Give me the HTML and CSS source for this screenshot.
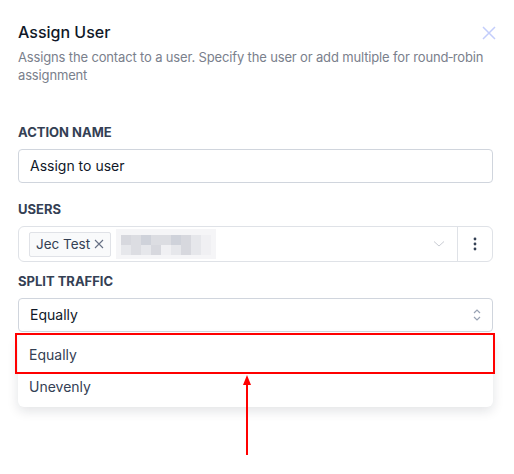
FILE: index.html
```html
<!DOCTYPE html>
<html lang="en">
<head>
    <meta charset="UTF-8">
    <meta name="viewport" content="width=device-width, initial-scale=1.0">
    <title>Assign User</title>
    <link rel="stylesheet" href="styles.css">
</head>
<body>
<div class="panel">
    <div class="header">
        <h1 class="title">Assign User</h1>
        <svg class="close" width="14" height="14" viewBox="0 0 14 14"><path d="M1 1L13 13M13 1L1 13" stroke="currentColor" stroke-width="1.5" fill="none"/></svg>
    </div>
    <p class="desc">Assigns the contact to a user. Specify the user or add multiple for round&#8209;robin assignment</p>

    <div class="label label-first">ACTION NAME</div>
    <div class="input">Assign to user</div>

    <div class="label">USERS</div>
    <div class="users">
        <div class="users-main">
            <span class="chip">Jec Test
                <svg class="chip-x" width="10" height="10" viewBox="0 0 10 10"><path d="M1 1L9 9M9 1L1 9" stroke="#667085" stroke-width="1.1" fill="none"/></svg>
            </span>
            <div class="blur">
                <div class="blur-row">
                    <i class="s3"></i><i class="s2"></i><i class="s4"></i><i class="s2"></i><i class="s2"></i><i class="s4"></i><i class="s3"></i><i class="s1"></i><i class="s0"></i>
                </div>
                <div class="blur-row">
                    <i class="s1"></i><i class="s2"></i><i class="s1"></i><i class="s3"></i><i class="s0"></i><i class="s1"></i><i class="s3"></i><i class="s1"></i><i class="s0"></i>
                </div>
            </div>
            <svg class="chev" width="12" height="8" viewBox="0 0 12 8"><path d="M1 1.5L6 6L11 1.5" stroke="#c9ccd3" stroke-width="1" fill="none"/></svg>
        </div>
        <div class="users-more">
            <svg width="4" height="14" viewBox="0 0 4 14"><circle cx="2" cy="2" r="1.4" fill="#344054"/><circle cx="2" cy="7" r="1.4" fill="#344054"/><circle cx="2" cy="12" r="1.4" fill="#344054"/></svg>
        </div>
    </div>

    <div class="label label-split">SPLIT TRAFFIC</div>
    <div class="select-wrap">
        <div class="input select">
            <span>Equally</span>
            <svg width="10" height="14" viewBox="0 0 10 14"><path d="M2 5L5 2L8 5M2 9L5 12L8 9" stroke="#98a2b3" stroke-width="1.2" fill="none"/></svg>
        </div>
        <div class="menu">
            <div class="option">Equally</div>
            <div class="option">Unevenly</div>
        </div>
        <div class="highlight"></div>
        <div class="arrow">
            <div class="arrow-head"></div>
            <div class="arrow-line"></div>
        </div>
    </div>
    <div class="spacer"></div>
</div>
</body>
</html>
```

FILE: styles.css
```css
body {
    margin: 0;
    background: #fff;
    font-family: Inter, "Noto Sans", sans-serif;
    color: #101828;
}
.panel {
    padding: 20px 21px 0 18px;
}
.header {
    display: flex;
    justify-content: space-between;
    align-items: center;
    height: 24px;
}
.title {
    margin: 0;
    font-size: 16px;
    font-weight: 500;
    line-height: 24px;
    color: #101828;
}
.close {
    color: #c3cdfb;
    margin-right: -3px;
    margin-top: 2px;
}
.desc {
    margin: 4px 0 0;
    font-size: 13px;
    letter-spacing: -0.15px;
    line-height: 18px;
    color: #7a808c;
}
.label {
    font-size: 13px;
    font-weight: 700;
    line-height: 18px;
    color: #344054;
    margin-top: 17px;
    margin-bottom: 8px;
}
.label-first {
    margin-top: 39px;
}
.label-split {
    margin-top: 10px;
}
.input {
    box-sizing: border-box;
    height: 34px;
    border: 1px solid #d0d5dd;
    border-radius: 4px;
    padding: 0 11px;
    font-size: 14px;
    line-height: 32px;
    color: #101828;
}
.users {
    box-sizing: border-box;
    height: 36px;
    border: 1px solid #dfe2e7;
    border-radius: 6px;
    display: flex;
}
.users-main {
    flex: 1;
    display: flex;
    align-items: center;
    padding-left: 10px;
}
.chip {
    box-sizing: border-box;
    height: 25px;
    border: 1px solid #e0e2e7;
    background: #f9fafb;
    border-radius: 2px;
    padding: 0 6px;
    font-size: 13.5px;
    line-height: 23px;
    color: #344054;
    display: flex;
    align-items: center;
    gap: 4px;
}
.blur {
    margin-left: 5px;
    background: #f5f5f7;
    padding: 6px 5px 4px 5px;
    height: 20px;
}
.blur-row {
    display: flex;
}
.blur-row i {
    width: 10px;
    height: 10px;
}
.s0 { background: #f0f0f3; }
.s1 { background: #e6e7eb; }
.s2 { background: #dcdde2; }
.s3 { background: #d7d8de; }
.s4 { background: #cfd2da; }
.chev {
    margin-left: auto;
    margin-right: 12px;
}
.users-more {
    width: 34px;
    border-left: 1px solid #dfe2e7;
    display: flex;
    align-items: center;
    justify-content: center;
}
.select-wrap {
    position: relative;
}
.select {
    display: flex;
    justify-content: space-between;
    align-items: center;
    padding-right: 10px;
}
.menu {
    margin-top: 3px;
    background: #fff;
    border-radius: 6px;
    padding: 4px 0;
    box-shadow: 0 4px 12px rgba(16, 24, 40, 0.12);
}
.option {
    height: 32px;
    line-height: 32px;
    padding-left: 11px;
    font-size: 14px;
    color: #344054;
}
.highlight {
    position: absolute;
    left: -3px;
    right: -2px;
    top: 35px;
    height: 37px;
    border: 2px solid #ff0000;
}
.arrow {
    position: absolute;
    left: 224px;
    top: 77px;
    width: 10px;
    display: flex;
    flex-direction: column;
    align-items: center;
}
.arrow-head {
    width: 0;
    height: 0;
    border-left: 4.5px solid transparent;
    border-right: 4.5px solid transparent;
    border-bottom: 10px solid #ff0000;
}
.arrow-line {
    width: 2px;
    height: 72px;
    margin-top: -2px;
    background: #ff0000;
}
.spacer {
    height: 60px;
}
```
